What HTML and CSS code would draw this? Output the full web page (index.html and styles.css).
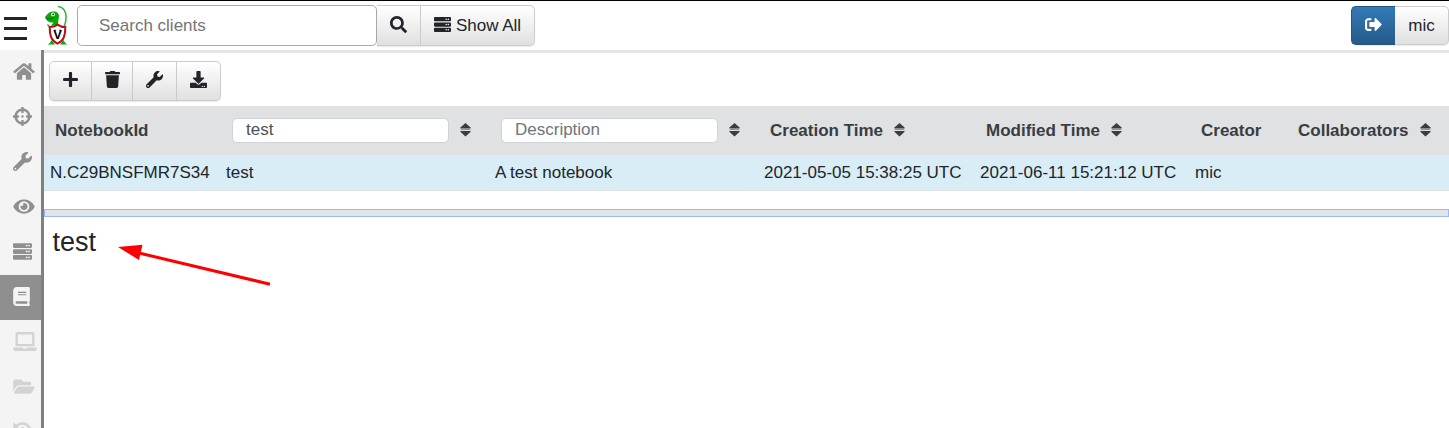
FILE: index.html
```html
<!DOCTYPE html>
<html lang="en">
<head>
<meta charset="utf-8">
<title>Notebooks</title>
<link rel="stylesheet" href="styles.css">
</head>
<body>
<svg class="sprite" aria-hidden="true">
  <symbol id="home" viewBox="0 0 576 512"><path d="M280.37 148.26L96 300.11V464a16 16 0 0 0 16 16l112.06-.29a16 16 0 0 0 15.92-16V368a16 16 0 0 1 16-16h64a16 16 0 0 1 16 16v95.64a16 16 0 0 0 16 16.05L464 480a16 16 0 0 0 16-16V300L295.67 148.26a12.19 12.19 0 0 0-15.3 0zM571.6 251.47L488 182.56V44.05a12 12 0 0 0-12-12h-56a12 12 0 0 0-12 12v72.61L318.47 43a48 48 0 0 0-61 0L4.34 251.47a12 12 0 0 0-1.6 16.9l25.5 31A12 12 0 0 0 45.15 301l235.22-193.74a12.19 12.19 0 0 1 15.3 0L530.9 301a12 12 0 0 0 16.9-1.6l25.5-31a12 12 0 0 0-1.7-16.93z"/></symbol>
  <symbol id="crosshairs" viewBox="0 0 512 512"><path d="M500 224h-30.364C455.724 130.325 381.675 56.276 288 42.364V12c0-6.627-5.373-12-12-12h-40c-6.627 0-12 5.373-12 12v30.364C130.325 56.276 56.276 130.325 42.364 224H12c-6.627 0-12 5.373-12 12v40c0 6.627 5.373 12 12 12h30.364C56.276 381.675 130.325 455.724 224 469.636V500c0 6.627 5.373 12 12 12h40c6.627 0 12-5.373 12-12v-30.364C381.675 455.724 455.724 381.675 469.636 288H500c6.627 0 12-5.373 12-12v-40c0-6.627-5.373-12-12-12zM288 404.634V364c0-6.627-5.373-12-12-12h-40c-6.627 0-12 5.373-12 12v40.634C165.826 392.232 119.783 346.243 107.366 288H148c6.627 0 12-5.373 12-12v-40c0-6.627-5.373-12-12-12h-40.634C119.768 165.826 165.757 119.783 224 107.366V148c0 6.627 5.373 12 12 12h40c6.627 0 12-5.373 12-12v-40.634C346.174 119.768 392.217 165.757 404.634 224H364c-6.627 0-12 5.373-12 12v40c0 6.627 5.373 12 12 12h40.634C392.232 346.174 346.243 392.217 288 404.634zM288 256c0 17.673-14.327 32-32 32s-32-14.327-32-32c0-17.673 14.327-32 32-32s32 14.327 32 32z"/></symbol>
  <symbol id="wrench" viewBox="0 0 512 512"><path d="M507.73 109.1c-2.24-9.03-13.54-12.09-20.12-5.51l-74.36 74.36-67.88-11.31-11.31-67.88 74.36-74.36c6.62-6.62 3.43-17.9-5.66-20.16-47.38-11.74-99.55.91-136.58 37.93-39.64 39.64-50.55 97.1-34.05 147.2L18.74 402.76c-24.99 24.99-24.99 65.51 0 90.5 24.99 24.99 65.51 24.99 90.5 0l213.21-213.21c50.12 16.71 107.47 5.68 147.37-34.22 37.07-37.07 49.7-89.32 37.91-136.73zM64 472c-13.25 0-24-10.75-24-24 0-13.26 10.75-24 24-24s24 10.74 24 24c0 13.25-10.75 24-24 24z"/></symbol>
  <symbol id="eye" viewBox="0 0 576 512"><path d="M572.52 241.4C518.29 135.59 410.93 64 288 64S57.68 135.64 3.48 241.41a32.35 32.35 0 0 0 0 29.19C57.71 376.41 165.07 448 288 448s230.32-71.64 284.52-177.41a32.35 32.35 0 0 0 0-29.19zM288 400a144 144 0 1 1 144-144 143.93 143.93 0 0 1-144 144zm0-240a95.31 95.31 0 0 0-25.31 3.79 47.85 47.85 0 0 1-66.9 66.9A95.78 95.78 0 1 0 288 160z"/></symbol>
  <symbol id="server" viewBox="0 0 512 512"><path d="M480 160H32c-17.673 0-32-14.327-32-32V64c0-17.673 14.327-32 32-32h448c17.673 0 32 14.327 32 32v64c0 17.673-14.327 32-32 32zm-48-88c-13.255 0-24 10.745-24 24s10.745 24 24 24 24-10.745 24-24-10.745-24-24-24zm-64 0c-13.255 0-24 10.745-24 24s10.745 24 24 24 24-10.745 24-24-10.745-24-24-24zm112 248H32c-17.673 0-32-14.327-32-32v-64c0-17.673 14.327-32 32-32h448c17.673 0 32 14.327 32 32v64c0 17.673-14.327 32-32 32zm-48-88c-13.255 0-24 10.745-24 24s10.745 24 24 24 24-10.745 24-24-10.745-24-24-24zm-64 0c-13.255 0-24 10.745-24 24s10.745 24 24 24 24-10.745 24-24-10.745-24-24-24zm112 248H32c-17.673 0-32-14.327-32-32v-64c0-17.673 14.327-32 32-32h448c17.673 0 32 14.327 32 32v64c0 17.673-14.327 32-32 32zm-48-88c-13.255 0-24 10.745-24 24s10.745 24 24 24 24-10.745 24-24-10.745-24-24-24zm-64 0c-13.255 0-24 10.745-24 24s10.745 24 24 24 24-10.745 24-24-10.745-24-24-24z"/></symbol>
  <symbol id="book" viewBox="0 0 448 512"><path d="M448 360V24c0-13.3-10.7-24-24-24H96C43 0 0 43 0 96v320c0 53 43 96 96 96h328c13.3 0 24-10.7 24-24v-16c0-7.5-3.5-14.3-8.9-18.7-4.2-15.4-4.2-59.3 0-74.7 5.4-4.3 8.9-11.1 8.9-18.6zM128 134c0-3.3 2.7-6 6-6h212c3.3 0 6 2.7 6 6v20c0 3.3-2.7 6-6 6H134c-3.3 0-6-2.7-6-6v-20zm0 64c0-3.3 2.7-6 6-6h212c3.3 0 6 2.7 6 6v20c0 3.3-2.7 6-6 6H134c-3.3 0-6-2.7-6-6v-20zm253.4 250H96c-17.7 0-32-14.3-32-32 0-17.6 14.4-32 32-32h285.4c-1.9 17.1-1.9 46.9 0 64z"/></symbol>
  <symbol id="laptop" viewBox="0 0 640 512"><path d="M624 416H381.54c-.74 19.81-14.71 32-32.74 32H288c-18.69 0-33.02-17.47-32.77-32H16c-8.8 0-16 7.2-16 16v16c0 35.2 28.8 64 64 64h512c35.2 0 64-28.8 64-64v-16c0-8.8-7.2-16-16-16zM576 48c0-26.4-21.6-48-48-48H112C85.6 0 64 21.6 64 48v336h512V48zm-64 272H128V64h384v256z"/></symbol>
  <symbol id="folder" viewBox="0 0 576 512"><path d="M572.694 292.093L500.27 416.248A63.997 63.997 0 0 1 444.989 448H45.025c-18.523 0-30.064-20.093-20.731-36.093l72.424-124.155A64 64 0 0 1 152 256h399.964c18.523 0 30.064 20.093 20.73 36.093zM152 224h328v-48c0-26.51-21.49-48-48-48H272l-64-64H48C21.49 64 0 85.49 0 112v278.046l69.077-118.418C86.214 242.25 117.989 224 152 224z"/></symbol>
  <symbol id="history" viewBox="0 0 512 512"><path d="M504 255.531c.253 136.64-111.18 248.372-247.82 248.468-59.015.042-113.223-20.53-155.822-54.911-11.077-8.94-11.905-25.541-1.839-35.607l11.267-11.267c8.609-8.609 22.353-9.551 31.891-1.984C173.062 425.135 212.781 440 256 440c101.705 0 184-82.311 184-184 0-101.705-82.311-184-184-184-48.814 0-93.149 18.969-126.068 49.932l50.754 50.754c10.08 10.08 2.941 27.314-11.313 27.314H24c-8.837 0-16-7.163-16-16V38.627c0-14.254 17.234-21.393 27.314-11.314l49.372 49.372C129.209 34.136 189.552 8 256 8c136.81 0 247.747 110.78 248 247.531zm-180.912 78.784l9.823-12.63c8.138-10.463 6.253-25.542-4.21-33.679L288 256.349V152c0-13.255-10.745-24-24-24h-16c-13.255 0-24 10.745-24 24v135.651l65.409 50.874c10.463 8.137 25.541 6.253 33.679-4.21z"/></symbol>
  <symbol id="plus" viewBox="0 0 448 512"><path d="M416 208H272V64c0-17.67-14.33-32-32-32h-32c-17.67 0-32 14.33-32 32v144H32c-17.67 0-32 14.33-32 32v32c0 17.67 14.33 32 32 32h144v144c0 17.67 14.33 32 32 32h32c17.67 0 32-14.33 32-32V304h144c17.67 0 32-14.33 32-32v-32c0-17.67-14.33-32-32-32z"/></symbol>
  <symbol id="trash" viewBox="0 0 448 512"><path d="M432 32H312l-9.4-18.7A24 24 0 0 0 281.1 0H166.8a23.72 23.72 0 0 0-21.4 13.3L136 32H16A16 16 0 0 0 0 48v32a16 16 0 0 0 16 16h416a16 16 0 0 0 16-16V48a16 16 0 0 0-16-16zM53.2 467a48 48 0 0 0 47.9 45h245.8a48 48 0 0 0 47.9-45L416 128H32z"/></symbol>
  <symbol id="download" viewBox="0 0 512 512"><path d="M216 0h80c13.3 0 24 10.7 24 24v168h87.7c17.8 0 26.7 21.5 14.1 34.1L269.7 378.3c-7.5 7.5-19.8 7.5-27.3 0L90.1 226.1c-12.6-12.6-3.7-34.1 14.1-34.1H192V24c0-13.3 10.7-24 24-24zm296 376v112c0 13.3-10.7 24-24 24H24c-13.3 0-24-10.7-24-24V376c0-13.3 10.7-24 24-24h146.7l49 49c20.1 20.1 52.5 20.1 72.6 0l49-49H488c13.3 0 24 10.7 24 24zm-124 88c0-11-9-20-20-20s-20 9-20 20 9 20 20 20 20-9 20-20zm64 0c0-11-9-20-20-20s-20 9-20 20 9 20 20 20 20-9 20-20z"/></symbol>
  <symbol id="search" viewBox="0 0 512 512"><path d="M505 442.7L405.3 343c-4.5-4.5-10.6-7-17-7H372c27.6-35.3 44-79.7 44-128C416 93.1 322.9 0 208 0S0 93.1 0 208s93.1 208 208 208c48.3 0 92.7-16.4 128-44v16.3c0 6.4 2.5 12.5 7 17l99.7 99.7c9.4 9.4 24.6 9.4 33.9 0l28.3-28.3c9.4-9.4 9.4-24.6.1-34zM208 336c-70.7 0-128-57.2-128-128 0-70.7 57.2-128 128-128 70.7 0 128 57.2 128 128 0 70.7-57.2 128-128 128z"/></symbol>
  <symbol id="signout" viewBox="0 0 512 512"><path d="M497 273L329 441c-15 15-41 4.5-41-17v-96H152c-13.3 0-24-10.7-24-24v-96c0-13.3 10.7-24 24-24h136V88c0-21.4 25.9-32 41-17l168 168c9.3 9.4 9.3 24.6 0 34zM192 436v-40c0-6.6-5.4-12-12-12H96c-17.7 0-32-14.3-32-32V160c0-17.7 14.3-32 32-32h84c6.6 0 12-5.4 12-12V76c0-6.6-5.4-12-12-12H96c-53 0-96 43-96 96v192c0 53 43 96 96 96h84c6.6 0 12-5.4 12-12z"/></symbol>
  <symbol id="sort" viewBox="0 0 11 14"><path d="M5.5 0L10.6 4.6Q11 5.4 10.200 5.400H.8Q0 5.400.4 4.600zM5.500 13.400L.4 8.800Q0 8 .8 8H10.200Q11 8 10.600 8.800z"/><path d="M.6 6.200h9.800v.8H.6z" opacity=".6"/></symbol>
</svg>

<header class="navbar">
  <button class="burger" aria-label="Menu"><span></span><span></span><span></span></button>
  <svg class="logo" viewBox="0 0 26 42">
    <path d="M14 2.500C21.500 3.500 24 11 20.500 22" fill="none" stroke="#2bb53a" stroke-width="1.500"/>
    <path d="M1 13C3.500 10.500 5 7.600 9 7.600c4.200-.300 6.700 2.500 5.800 5.900-.300 2.500-.800 4-.6 7l-7.200 1.500c.500-1.500 2-2.500 2.500-3.500-3.500.500-7-1-8.500-5.500z" fill="#08a808"/>
    <path d="M2 14.300c2.500 1 5 .8 7.500-.5" fill="none" stroke="#045f08" stroke-width=".8"/>
    <circle cx="9" cy="10.400" r="1.900" fill="#fff"/><circle cx="9.200" cy="10.400" r=".8"/>
    <path d="M3.500 20.500l2.500 3" fill="none" stroke="#2bb53a" stroke-width="1.500"/>
    <path d="M3.500 40.500q3-1.500 4-4.500l3.500 4.500zM23.500 40.500q-3-1.500-4-4.500L16 40.500z" fill="#08a808"/>
    <path d="M13.500 20.600c2.500 1.800 4.700 2.500 7.800 2.500 0 8-1.300 13.600-7.800 16.500-6.500-2.900-7.800-8.500-7.800-16.500 3.100 0 5.300-.700 7.800-2.500z" fill="#fff" stroke="#b5121b" stroke-width="2"/>
    <path d="M10 26.200h2.200M15 26.200h2.200" stroke="#000" stroke-width=".7"/>
    <text x="13.500" y="34.500" text-anchor="middle" class="logo-letter">V</text>
  </svg>
  <div class="group search">
    <input class="search-input" type="text" placeholder="Search clients">
    <button class="btn btn-search" aria-label="Search"><svg class="ico"><use href="#search"/></svg></button>
    <button class="btn btn-all"><svg class="ico"><use href="#server"/></svg><span>Show All</span></button>
  </div>
  <div class="group user">
    <button class="btn btn-primary" aria-label="Sign out"><svg class="ico"><use href="#signout"/></svg></button>
    <button class="btn btn-user">mic</button>
  </div>
</header>

<div class="layout">
  <nav class="sidebar">
    <a class="nav-item"><svg class="nav-ico wide"><use href="#home"/></svg></a>
    <a class="nav-item"><svg class="nav-ico"><use href="#crosshairs"/></svg></a>
    <a class="nav-item"><svg class="nav-ico"><use href="#wrench"/></svg></a>
    <a class="nav-item"><svg class="nav-ico wide"><use href="#eye"/></svg></a>
    <a class="nav-item"><svg class="nav-ico"><use href="#server"/></svg></a>
    <a class="nav-item active"><svg class="nav-ico narrow"><use href="#book"/></svg></a>
    <a class="nav-item disabled"><svg class="nav-ico wider"><use href="#laptop"/></svg></a>
    <a class="nav-item disabled"><svg class="nav-ico wide"><use href="#folder"/></svg></a>
    <a class="nav-item disabled"><svg class="nav-ico"><use href="#history"/></svg></a>
  </nav>
  <main class="content">
    <div class="group toolbar">
      <button class="btn tool-add" aria-label="New notebook"><svg class="ico narrow"><use href="#plus"/></svg></button>
      <button class="btn tool-del" aria-label="Delete"><svg class="ico narrow"><use href="#trash"/></svg></button>
      <button class="btn tool-edit" aria-label="Edit"><svg class="ico"><use href="#wrench"/></svg></button>
      <button class="btn tool-export" aria-label="Export"><svg class="ico"><use href="#download"/></svg></button>
    </div>
    <table class="notebooks">
      <colgroup><col class="c-id"><col class="c-name"><col class="c-desc"><col class="c-time"><col class="c-mod"><col class="c-creator"><col></colgroup>
      <thead>
        <tr>
          <th>NotebookId</th>
          <th class="filter"><div><input type="text" value="test"><svg class="sort"><use href="#sort"/></svg></div></th>
          <th class="filter"><div><input type="text" placeholder="Description"><svg class="sort"><use href="#sort"/></svg></div></th>
          <th>Creation Time<svg class="sort"><use href="#sort"/></svg></th>
          <th>Modified Time<svg class="sort"><use href="#sort"/></svg></th>
          <th>Creator</th>
          <th>Collaborators<svg class="sort"><use href="#sort"/></svg></th>
        </tr>
      </thead>
      <tbody>
        <tr><td>N.C29BNSFMR7S34</td><td>test</td><td>A test notebook</td><td>2021-05-05 15:38:25 UTC</td><td>2021-06-11 15:21:12 UTC</td><td>mic</td><td></td></tr>
      </tbody>
    </table>
    <div class="resizer"></div>
    <h1 class="title">test</h1>
    <svg class="arrow" viewBox="0 0 160 50"><path d="M22 9L153 40.200" stroke="#f00" stroke-width="3"/><path d="M1 3L25.500 .700L22 16z" fill="#f00"/></svg>
  </main>
</div>
</body>
</html>
```

FILE: styles.css
```css
* { box-sizing: border-box; }
body {
  margin: 0;
  height: 428px;
  overflow: hidden;
  border-top: 1px solid #000;
  background: #fff;
  color: #212529;
  font: 17px/25px "Liberation Sans", Arial, sans-serif;
}
button, input { font: inherit; color: inherit; margin: 0; }
.sprite { display: none; }

.navbar { display: flex; align-items: flex-start; height: 49px; padding-left: 4px; }
.burger { display: flex; flex-direction: column; gap: 7px; width: 23px; margin-top: 16px; padding: 0; border: 0; background: none; }
.burger span { height: 3px; background: #212529; }
.logo { width: 26px; height: 42px; margin: 3px 0 0 17px; flex: none; }
.logo-letter { font: bold 13px "Liberation Sans", Arial, sans-serif; }

.group { display: flex; }
.btn {
  display: flex;
  align-items: center;
  justify-content: center;
  padding: 0;
  border: 1px solid #ccc;
  border-left-width: 0;
  background: linear-gradient(#fff, #e0e0e0);
  box-shadow: 0 1px 1px rgba(0, 0, 0, .08);
}
.btn:last-child { border-radius: 0 5px 5px 0; }
.ico { width: 17px; height: 17px; margin-bottom: 2px; fill: currentColor; }
.ico.narrow { width: 15px; }

.search { height: 41px; margin: 4px 0 0 7px; }
.search-input { width: 300px; padding: 0 21px; border: 1px solid #aaa; border-radius: 5px; background: #fff; outline: 0; }
.search-input::placeholder { color: #757575; }
.btn-search { width: 44px; }
.btn-all { width: 114px; gap: 5px; }
.user { height: 39px; margin: 5px 0 0 auto; }
.btn-primary { width: 44px; border: 1px solid #245580; border-right: 0; border-radius: 5px 0 0 5px; background: linear-gradient(#337ab7, #265a88); color: #fff; }
.btn-user { width: 54px; }

.layout { display: flex; height: 378px; }
.sidebar { width: 44px; flex: none; border-right: 3px solid #808080; background: #f4f4f4; overflow: hidden; }
.nav-item { display: flex; align-items: center; height: 45px; padding: 0 0 2px 13px; color: #8f8f8f; }
.nav-item.active { background: #8f8f8f; color: #f4f4f4; }
.nav-item.disabled { color: #d3d3d3; }
.nav-ico { width: 19px; height: 19px; flex: none; fill: currentColor; }
.nav-ico.wide { width: 22px; }
.nav-ico.narrow { width: 17px; }
.nav-ico.wider { width: 24px; }

.content { position: relative; flex: 1; min-width: 0; border-top: 3px solid #e4e4e4; }
.toolbar { height: 40px; margin: 8px 0 5px 5px; }
.toolbar .ico { margin-bottom: 4px; }
.tool-add { width: 43px; border-left-width: 1px; border-radius: 5px 0 0 5px; }
.tool-del { width: 41px; }
.tool-edit { width: 44px; }
.tool-export { width: 44px; }

.notebooks { width: 1405px; table-layout: fixed; border-collapse: separate; border-spacing: 0; }
.c-id { width: 176px; }
.c-name, .c-desc { width: 269px; }
.c-time { width: 216px; }
.c-mod { width: 215px; }
.c-creator { width: 97px; }
.notebooks th { height: 49px; padding: 0 0 0 12px; background: #e0e1e3; color: #383d42; text-align: left; white-space: nowrap; }
.notebooks th:first-child { padding-left: 11px; }
.notebooks td { height: 36px; padding: 0 0 0 6px; border-bottom: 1px solid #dee2e6; background: #d9edf7; white-space: nowrap; }
.filter div { display: flex; align-items: center; }
.filter input { width: 217px; height: 25px; padding: 0 13px 2px; border: 1px solid #ced4da; border-radius: 5px; background: #fff; color: #495057; font-weight: 400; outline: 0; }
.filter input::placeholder { color: #6c757d; }
.sort { width: 11px; height: 14px; margin-left: 11px; fill: currentColor; vertical-align: -1px; }
.filter .sort { margin-bottom: 1px; }

.resizer { height: 8px; margin-top: 18px; border: 1px solid #99b8ff; background: #e4e4e4; }
.title { margin: 9px 0 0 8.5px; font-size: 27px; line-height: 33px; font-weight: 400; }
/* Annotation pointing at the notebook title */
.arrow { position: absolute; left: 73px; top: 191px; width: 160px; height: 50px; }
```
